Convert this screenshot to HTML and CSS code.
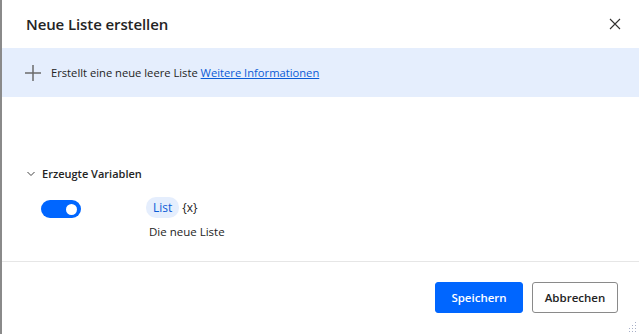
FILE: index.html
```html
<!DOCTYPE html>
<html lang="de">
<head>
<meta charset="utf-8">
<title>Neue Liste erstellen</title>
<link rel="stylesheet" href="styles.css">
</head>
<body>
<div class="dialog">
  <header class="header">
    <h1 class="title">Neue Liste erstellen</h1>
    <button class="close" aria-label="Schließen">
      <svg width="12" height="12" viewBox="0 0 12 12"><path d="M1 1L11 11M11 1L1 11" stroke="#323130" stroke-width="1.1" fill="none"/></svg>
    </button>
  </header>
  <div class="info">
    <svg class="plus" width="16" height="16" viewBox="0 0 16 16"><path d="M8 0V16M0 8H16" stroke="#6b6b6b" stroke-width="1.5" fill="none"/></svg>
    <span class="info-text">Erstellt eine neue leere Liste <a href="#" class="link">Weitere Informationen</a></span>
  </div>
  <div class="content">
    <div class="section-head">
      <svg class="chev" width="8" height="6" viewBox="0 0 8 6"><path d="M0.5 1L4 4.5L7.5 1" stroke="#444" stroke-width="1" fill="none"/></svg>
      <span class="section-title">Erzeugte Variablen</span>
    </div>
    <div class="var-row">
      <div class="toggle"><span class="knob"></span></div>
      <div class="var-info">
        <div class="var-name"><span class="chip">List</span><span class="braces">{x}</span></div>
        <div class="var-desc">Die neue Liste</div>
      </div>
    </div>
  </div>
  <footer class="footer">
    <button class="btn primary">Speichern</button>
    <button class="btn secondary">Abbrechen</button>
    <svg class="grip" width="10" height="10" viewBox="0 0 10 10">
      <g fill="#a8b0c8">
        <rect x="8" y="0" width="1" height="1"/>
        <rect x="5" y="3" width="1" height="1"/><rect x="8" y="3" width="1" height="1"/>
        <rect x="2" y="6" width="1" height="1"/><rect x="5" y="6" width="1" height="1"/><rect x="8" y="6" width="1" height="1"/>
        <rect x="2" y="9" width="1" height="1"/><rect x="5" y="9" width="1" height="1"/><rect x="8" y="9" width="1" height="1"/>
      </g>
    </svg>
  </footer>
</div>
</body>
</html>
```
FILE: styles.css
```css
* { box-sizing: border-box; }
html, body { margin: 0; padding: 0; background: #fff; }
body {
  font-family: "Open Sans", "Noto Sans", "Liberation Sans", sans-serif;
  color: #242424;
  width: 639px;
  height: 334px;
  overflow: hidden;
}
.dialog {
  height: 334px;
  border-left: 2px solid #8a8a8a;
  display: flex;
  flex-direction: column;
}
.header {
  height: 48px;
  display: flex;
  align-items: center;
  justify-content: space-between;
  padding: 0 16px 0 24px;
}
.title {
  margin: 0;
  font-size: 15px;
  font-weight: 600;
  color: #242424;
  letter-spacing: -0.1px;
}
.close {
  border: 0;
  background: none;
  padding: 0;
  width: 16px;
  height: 16px;
  display: flex;
  align-items: center;
  justify-content: center;
  cursor: pointer;
}
.info {
  height: 49px;
  background: #e5eefd;
  display: flex;
  align-items: center;
  padding-left: 23px;
  gap: 10px;
}
.info-text { font-size: 11.2px; color: #242424; }
.link { color: #0b5cd6; text-decoration: underline; }
.content {
  flex: 1;
  padding: 68px 0 0 24px;
}
.section-head {
  display: flex;
  align-items: center;
  gap: 7px;
  height: 17px;
}
.chev { margin-left: 1px; }
.section-title { font-size: 11px; font-weight: 600; color: #242424; }
.var-row {
  display: flex;
  margin-top: 15px;
  padding-left: 15px;
}
.toggle {
  width: 40px;
  height: 18px;
  margin-top: 3px;
  border-radius: 9px;
  background: #0066ff;
  display: flex;
  align-items: center;
  justify-content: flex-end;
  padding-right: 4px;
}
.knob {
  width: 11px;
  height: 11px;
  border-radius: 50%;
  background: #fff;
}
.var-info { margin-left: 65px; }
.var-name { display: flex; align-items: center; gap: 3px; }
.chip {
  background: #e5eefd;
  color: #0b5cd6;
  font-size: 12px;
  line-height: 15px;
  padding: 3px 7px;
  border-radius: 10px;
}
.braces { font-size: 12px; color: #242424; }
.var-desc { font-size: 11.5px; margin-top: 6px; padding-left: 3px; }
.footer {
  position: relative;
  height: 73px;
  border-top: 1px solid #e6e6e6;
  display: flex;
  justify-content: flex-end;
  align-items: flex-start;
  padding: 20px 21px 0 0;
  gap: 9px;
}
.btn {
  height: 31px;
  font-family: inherit;
  font-size: 11.5px;
  font-weight: 600;
  border-radius: 3px;
  cursor: pointer;
}
.primary {
  width: 88px;
  background: #0066ff;
  color: #fff;
  border: 1px solid #0066ff;
}
.secondary {
  width: 86px;
  background: #fff;
  color: #242424;
  border: 1px solid #8a8a8a;
}
.grip {
  position: absolute;
  right: 2px;
  bottom: 2px;
}
```
